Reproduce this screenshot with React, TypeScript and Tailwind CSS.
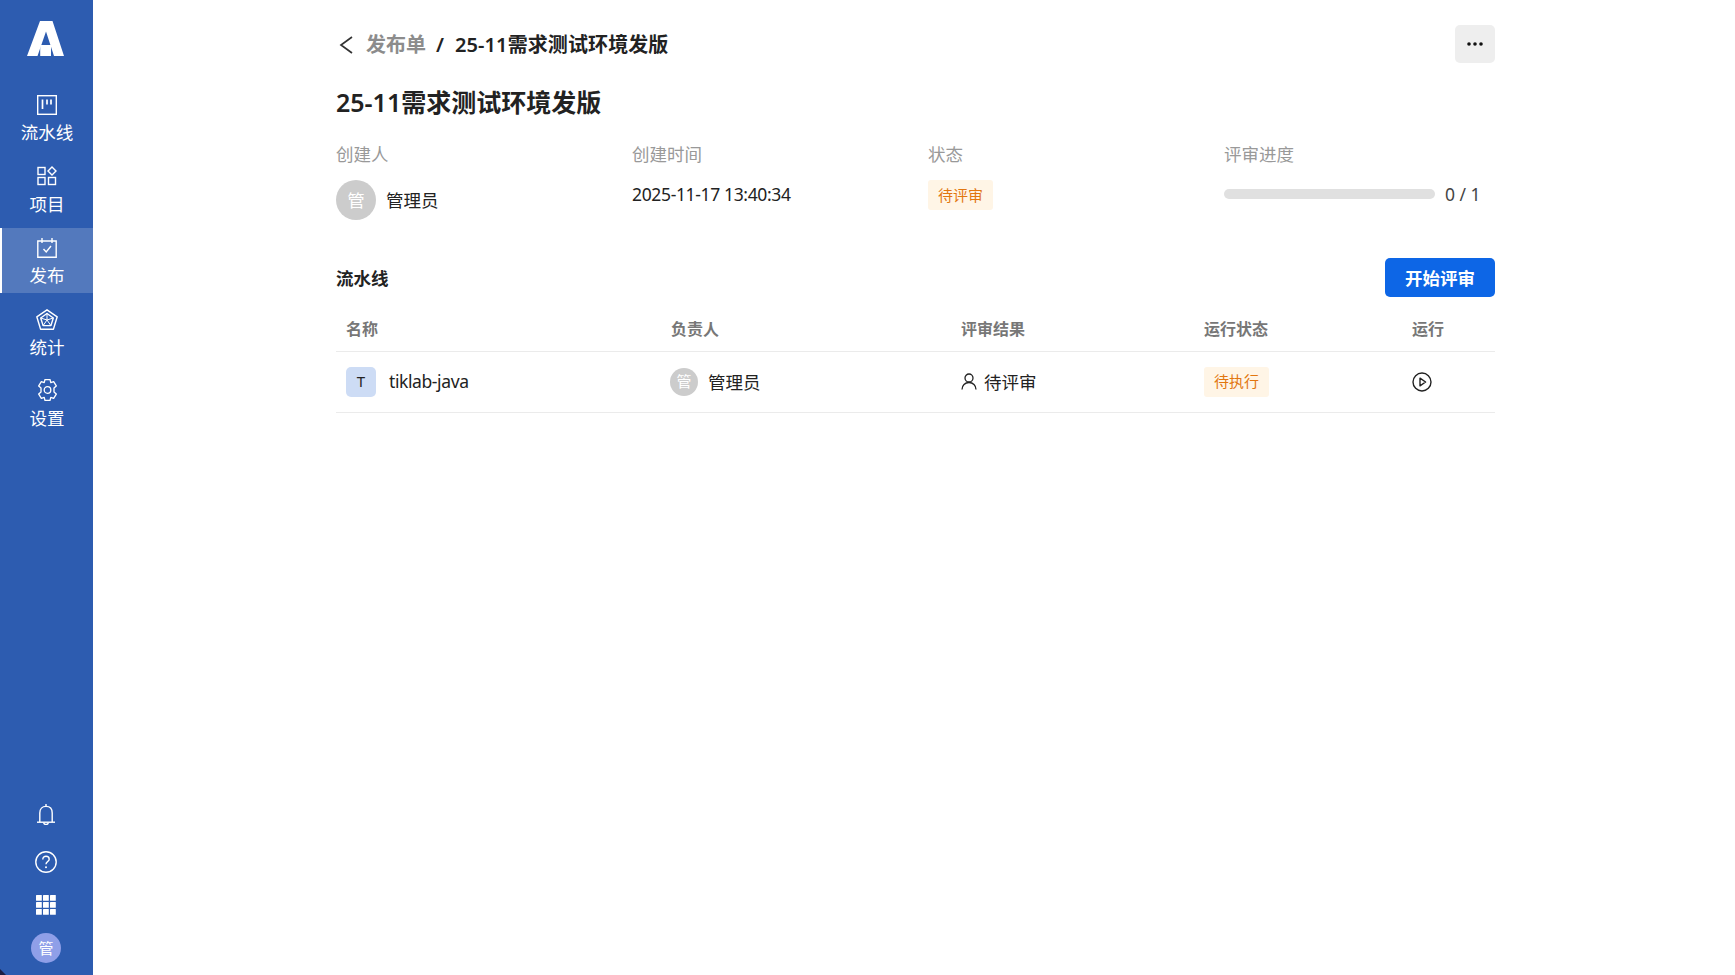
const FONT = "font-['Noto_Sans','Noto_Sans_CJK_SC',sans-serif]";

function Logo() {
  return (
    <svg width="37" height="35" viewBox="0 0 37 35" fill="white">
      <path d="M13 0H25.5L37 35H27L19 10.5L10.5 35H0Z" />
      <path d="M13.2 24H24V35H13.2Z" />
    </svg>
  );
}

function KanbanIcon() {
  return (
    <svg width="20" height="20" viewBox="0 0 20 20" fill="none" stroke="white" strokeWidth="1.4">
      <rect x="0.7" y="0.7" width="18.6" height="18.6" />
      <path d="M5.5 4.5V14M10 4.5V9.5M14 4.5V9.5" strokeWidth="1.7" />
    </svg>
  );
}

function ProjectIcon() {
  return (
    <svg width="20" height="20" viewBox="0 0 20 20" fill="none" stroke="white" strokeWidth="1.4">
      <rect x="1" y="1.5" width="7" height="7" />
      <rect x="1" y="11.5" width="7" height="7" />
      <rect x="11.5" y="11.5" width="7" height="7" />
      <path d="M15 1L19 5L15 9L11 5Z" />
    </svg>
  );
}

function ReleaseIcon() {
  return (
    <svg width="20" height="20" viewBox="0 0 20 20" fill="none" stroke="white" strokeWidth="1.4">
      <path d="M0.8 3H19.2V19.2H0.8Z" />
      <path d="M5 0V5M15 0V5" />
      <path d="M6.5 11L9.2 14L14 8" />
    </svg>
  );
}

function StatsIcon() {
  return (
    <svg width="22" height="21" viewBox="0 0 22 21" fill="none" stroke="white" strokeWidth="1.4" strokeLinejoin="round">
      <path d="M11 0.8L21.2 7.8L17.4 20.2H4.6L0.8 7.8Z" />
      <path d="M11 4.5L17.3 9L14.9 16.6H7.1L4.7 9Z" />
      <path d="M11 4.5V11M17.3 9L11 11M14.9 16.6L11 11M7.1 16.6L11 11M4.7 9L11 11" strokeWidth="1" />
    </svg>
  );
}

function GearIcon() {
  return (
    <svg width="21" height="22" viewBox="2.4 1 17.2 20" fill="none" stroke="white" strokeWidth="1.2" strokeLinejoin="round" className="-mt-[2px]">
      <path d="M8.7 1.5H13.3L14 4.3L16.6 3.4L19 7.3L16.9 9.2V12.8L19 14.7L16.6 18.6L14 17.7L13.3 20.5H8.7L8 17.7L5.4 18.6L3 14.7L5.1 12.8V9.2L3 7.3L5.4 3.4L8 4.3Z" />
      <circle cx="11" cy="11" r="3" />
    </svg>
  );
}

function BellIcon() {
  return (
    <svg width="18" height="22" viewBox="0 0 18 22" fill="none" stroke="white" strokeWidth="1.4">
      <path d="M9 0V2.5" />
      <path d="M2.8 18V9C2.8 5 5.2 2.4 9 2.4C12.8 2.4 15.2 5 15.2 9V18" />
      <path d="M0 18.2H18" />
      <path d="M6.8 18.5C6.8 21 11.2 21 11.2 18.5" />
    </svg>
  );
}

function HelpIcon() {
  return (
    <svg width="22" height="22" viewBox="0 0 22 22" fill="none" stroke="white" strokeWidth="1.4">
      <circle cx="11" cy="11" r="10.2" />
      <path d="M7.8 8.5C7.8 6.4 9.3 5.2 11 5.2C12.8 5.2 14.2 6.5 14.2 8.2C14.2 10.4 11 10.6 11 13.2" />
      <circle cx="11" cy="16.3" r="1" fill="white" stroke="none" />
    </svg>
  );
}

function GridIcon() {
  const cells = [0, 7, 14];
  return (
    <svg width="20" height="20" viewBox="0 0 20 20" fill="white">
      {cells.map((y) =>
        cells.map((x) => <rect key={`${x}-${y}`} x={x} y={y} width="5.8" height="5.8" rx="0.5" />)
      )}
    </svg>
  );
}

function NavItem({ icon, label, active }: { icon: React.ReactNode; label: string; active?: boolean }) {
  return (
    <div
      className={`flex h-[65px] flex-col items-center border-l-2 pr-[1px] text-[17.5px] leading-[20px] text-white ${
        active ? "border-white bg-[#5379bd]" : "border-transparent"
      }`}
    >
      <div className="flex h-[39px] shrink-0 items-center justify-center">{icon}</div>
      <div className="-mt-[2px]">{label}</div>
    </div>
  );
}

function Badge({ children }: { children: React.ReactNode }) {
  return (
    <span className="inline-flex h-[30px] w-[65px] items-center justify-center rounded-[3px] bg-[#fff5e6] text-[15px] text-[#e2760f]">
      {children}
    </span>
  );
}

const rowCols = "grid grid-cols-[325px_290px_243px_209px_92px]";

export default function App() {
  return (
    <div className={`${FONT} relative flex h-[975px] w-[1735px] overflow-hidden bg-white text-[#222]`}>
      <aside className="flex h-full w-[93px] shrink-0 flex-col bg-[#2d5cb0]">
        <div className="flex h-[85px] items-start justify-start pl-[27px] pt-[21px]">
          <Logo />
        </div>
        <nav className="flex flex-col gap-[6.5px]">
          <NavItem icon={<KanbanIcon />} label="流水线" />
          <NavItem icon={<ProjectIcon />} label="项目" />
          <NavItem icon={<ReleaseIcon />} label="发布" active />
          <NavItem icon={<StatsIcon />} label="统计" />
          <NavItem icon={<GearIcon />} label="设置" />
        </nav>
        <div className="mt-auto flex flex-col items-center pb-[12px] pr-[1px]">
          <div className="flex h-[46px] items-center"><BellIcon /></div>
          <div className="mt-[1px] flex h-[46px] items-center"><HelpIcon /></div>
          <div className="mt-[3px] flex h-[34px] items-center"><GridIcon /></div>
          <div className="mt-[11px] flex h-[30px] w-[30px] items-center justify-center rounded-full bg-[#8f9fe8] text-[15px] text-white">管</div>
        </div>
      </aside>
      <svg width="6" height="6" viewBox="0 0 6 6" className="absolute bottom-0 left-0">
        <path d="M0 0L6 6H0Z" fill="#1c1f45" />
      </svg>

      <main className="ml-[243px] w-[1159px]">
        <header className="flex h-[88px] items-center justify-between">
          <div className="flex items-center pt-[2px] text-[20px] font-semibold leading-[28px]">
            <svg width="20" height="20" viewBox="0 0 20 20" fill="none" stroke="#333" strokeWidth="1.7">
              <path d="M16 2L5 10L16 18" />
            </svg>
            <span className="ml-[10px] text-[#8c8c8c]">发布单</span>
            <span className="ml-[10px]">/</span>
            <span className="ml-[11px] tracking-[0.1px]">25-11需求测试环境发版</span>
          </div>
          <button className="flex h-[38px] w-[40px] items-center justify-center rounded-[5px] bg-[#eeeeee]">
            <svg width="18" height="6" viewBox="0 0 18 6" fill="#111">
              <circle cx="3" cy="3" r="1.8" />
              <circle cx="9" cy="3" r="1.8" />
              <circle cx="15" cy="3" r="1.8" />
            </svg>
          </button>
        </header>

        <h1 className="-mt-[1px] text-[25px] font-semibold leading-[30px]">25-11需求测试环境发版</h1>

        <section className="mt-[25px] grid grid-cols-4 gap-x-[25px]">
          <div>
            <div className="text-[17.5px] leading-[24px] text-[#999]">创建人</div>
            <div className="mt-[14px] flex items-center">
              <span className="flex h-[40px] w-[40px] items-center justify-center rounded-full bg-[#cccccc] text-[17.5px] text-white">管</span>
              <span className="ml-[10px] text-[17.5px]">管理员</span>
            </div>
          </div>
          <div>
            <div className="text-[17.5px] leading-[24px] text-[#999]">创建时间</div>
            <div className="mt-[13px] text-[17.5px] leading-[30px] tracking-[-0.35px]">2025-11-17 13:40:34</div>
          </div>
          <div>
            <div className="text-[17.5px] leading-[24px] text-[#999]">状态</div>
            <div className="mt-[14px]"><Badge>待评审</Badge></div>
          </div>
          <div>
            <div className="text-[17.5px] leading-[24px] text-[#999]">评审进度</div>
            <div className="mt-[13px] flex h-[30px] items-center">
              <div className="h-[10px] w-[211px] rounded-[5px] bg-[#e0e0e0]" />
              <span className="ml-[10px] text-[17.5px] text-[#444]">0 / 1</span>
            </div>
          </div>
        </section>

        <section className="mt-[38px]">
          <div className="flex h-[39px] items-center justify-between">
            <h2 className="pt-[1px] text-[17.5px] font-semibold">流水线</h2>
            <button className="h-[39px] w-[110px] rounded-[5px] bg-[#0d66e6] pt-[1px] text-[17.5px] font-semibold text-white">开始评审</button>
          </div>
          <div className={`${rowCols} mt-[11px] h-[44px] items-center border-b border-[#ebebeb] pb-[1px] text-[16px] font-semibold text-[#777]`}>
            <div className="pl-[10px]">名称</div>
            <div className="pl-[10px]">负责人</div>
            <div className="pl-[10px]">评审结果</div>
            <div className="pl-[10px]">运行状态</div>
            <div className="pl-[9px]">运行</div>
          </div>
          <div className={`${rowCols} h-[61px] items-center border-b border-[#ebebeb] pb-[1px] text-[17.5px]`}>
            <div className="flex items-center pl-[10px]">
              <span className="flex h-[30px] w-[30px] items-center justify-center rounded-[5px] bg-[#cddcf5] text-[15px]">T</span>
              <span className="ml-[13px] tracking-[-0.4px]">tiklab-java</span>
            </div>
            <div className="flex items-center pl-[9px]">
              <span className="flex h-[28px] w-[28px] items-center justify-center rounded-full bg-[#cccccc] text-[15px] text-white">管</span>
              <span className="ml-[10px] pt-[2px]">管理员</span>
            </div>
            <div className="flex items-center pl-[10px]">
              <svg width="16" height="17" viewBox="0 0 16 17" fill="none" stroke="#222" strokeWidth="1.3">
                <circle cx="8" cy="5" r="4" />
                <path d="M1 16.5C1 12.5 4 9.5 8 9.5C12 9.5 15 12.5 15 16.5" />
              </svg>
              <span className="ml-[7px] pt-[2px]">待评审</span>
            </div>
            <div className="pl-[10px]"><Badge>待执行</Badge></div>
            <div className="flex items-center pl-[9px]">
              <svg width="20" height="20" viewBox="0 0 20 20" fill="none" stroke="#222" strokeWidth="1.4">
                <circle cx="10" cy="10" r="9" />
                <path d="M8 6.2L13.6 10L8 13.8Z" strokeLinejoin="round" />
              </svg>
            </div>
          </div>
        </section>
      </main>
    </div>
  );
}
